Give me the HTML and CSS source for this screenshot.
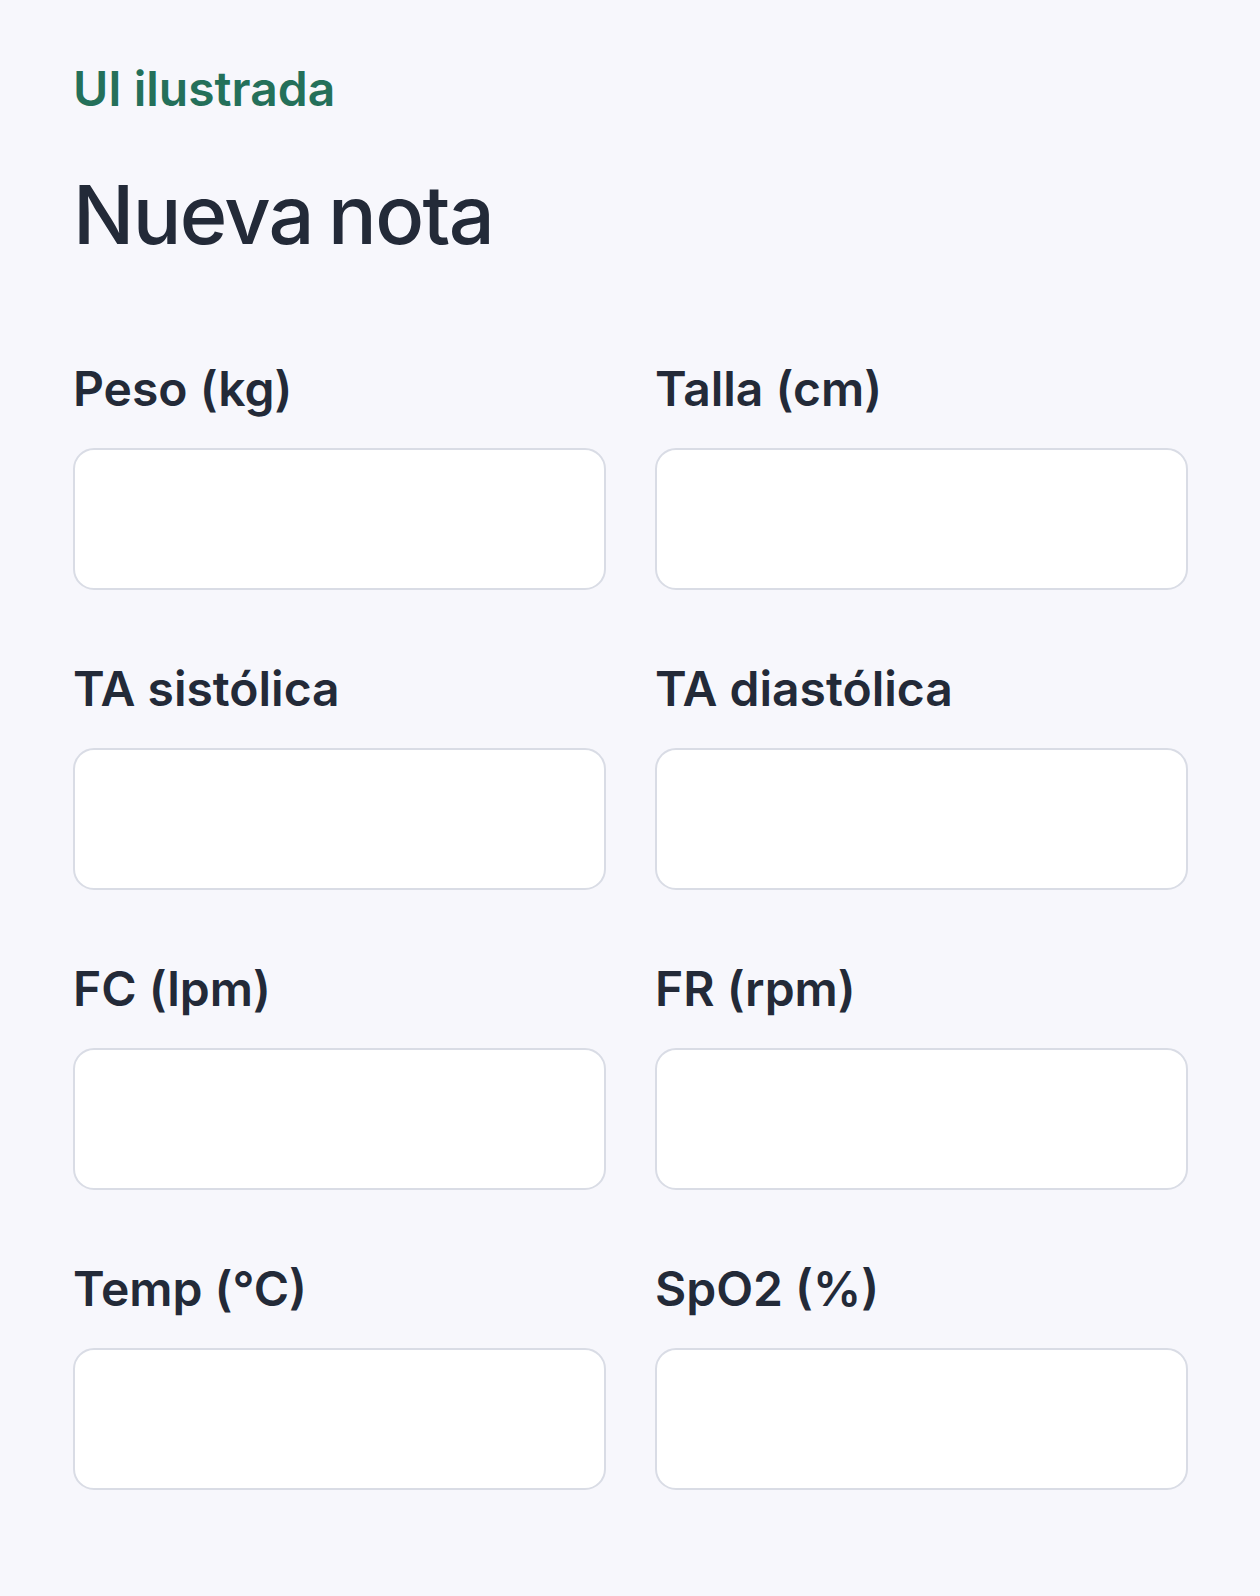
FILE: index.html
```html
<!DOCTYPE html>
<html lang="es">
<head>
  <meta charset="UTF-8">
  <meta name="viewport" content="width=device-width, initial-scale=1.0">
  <link rel="stylesheet" href="styles.css">
</head>
<body>

<main class="page">
  <p class="eyebrow">UI ilustrada</p>
  <h1 class="title">Nueva nota</h1>

  <!-- signos vitales -->
  <form class="vitals">
    <label class="field">
      <span class="field-label">Peso (kg)</span>
      <input class="field-input" type="text">
    </label>
    <label class="field">
      <span class="field-label">Talla (cm)</span>
      <input class="field-input" type="text">
    </label>
    <label class="field">
      <span class="field-label">TA sistólica</span>
      <input class="field-input" type="text">
    </label>
    <label class="field">
      <span class="field-label">TA diastólica</span>
      <input class="field-input" type="text">
    </label>
    <label class="field">
      <span class="field-label">FC (lpm)</span>
      <input class="field-input" type="text">
    </label>
    <label class="field">
      <span class="field-label">FR (rpm)</span>
      <input class="field-input" type="text">
    </label>
    <label class="field">
      <span class="field-label">Temp (°C)</span>
      <input class="field-input" type="text">
    </label>
    <label class="field">
      <span class="field-label">SpO2 (%)</span>
      <input class="field-input" type="text">
    </label>
  </form>
</main>

</body>
</html>
```

FILE: styles.css
```css
html, body {
  margin: 0;
  padding: 0;
  background: #f7f7fc;
}

body {
  font-family: Inter, "Noto Sans", "Liberation Sans", sans-serif;
  color: #232a38;
}

.page {
  padding: 60px 72px 80px 73px;
}

.eyebrow {
  margin: 0;
  font-size: 48px;
  line-height: 58px;
  font-weight: 600;
  color: #24705a;
}

.title {
  margin: 49px 0 0;
  font-size: 81px;
  line-height: 96px;
  font-weight: 500;
  letter-spacing: -0.02em;
  word-spacing: -0.06em;
}

.vitals {
  margin-top: 97px;
  display: grid;
  grid-template-columns: 1fr 1fr;
  column-gap: 49px;
  row-gap: 70px;
}

.field {
  display: flex;
  flex-direction: column;
  gap: 30px;
}

.field-label {
  font-size: 48px;
  line-height: 58px;
  font-weight: 600;
}

.field-input {
  box-sizing: border-box;
  height: 142px;
  width: 100%;
  margin: 0;
  padding: 0 28px;
  background: #fff;
  border: 2px solid #d9dce5;
  border-radius: 21px;
  font: inherit;
  font-size: 40px;
  outline: none;
}
```
